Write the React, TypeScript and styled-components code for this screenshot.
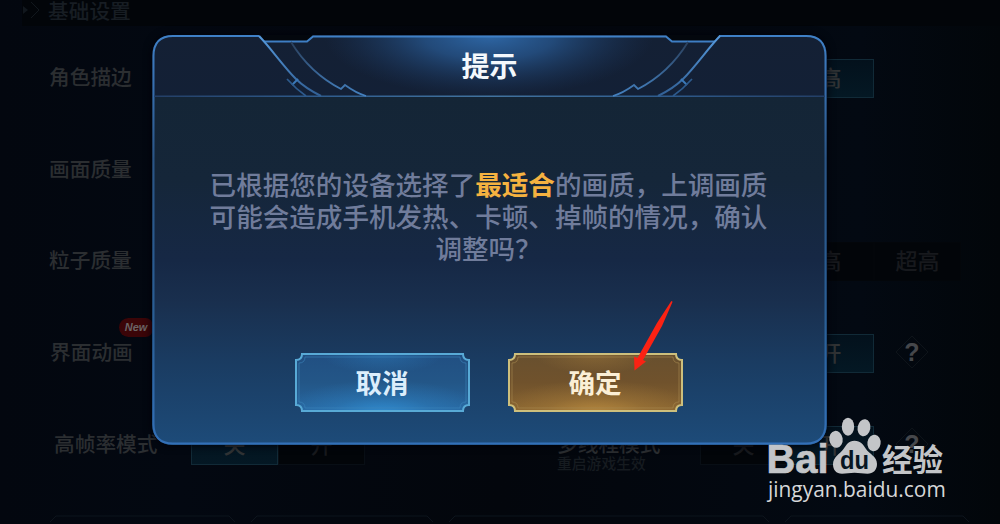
import styled, { createGlobalStyle } from "styled-components";

const GlobalStyle = createGlobalStyle`
  * {
    box-sizing: border-box;
  }
  body {
    margin: 0;
    background: #03070f;
    font-family: "Noto Sans CJK SC", "Liberation Sans", sans-serif;
  }
`;

const StyledScreen = styled.main`
  position: relative;
  width: 1000px;
  height: 524px;
  overflow: hidden;
  background: linear-gradient(
    90deg,
    #03070f 0,
    #030811 18%,
    #03060c 50%,
    #030912 86%,
    #02060a 100%
  );
`;

const StyledSettings = styled.section`
  display: flex;
  flex-direction: column;
  height: 100%;
`;

const StyledHeading = styled.div`
  display: flex;
  align-items: center;
  gap: 7px;
  flex: none;
  height: 26px;
  margin: 0 0 4px 22px;
  padding-bottom: 7px;
  background: #020509;
  color: #171d23;
  font-size: 20.7px;
  font-weight: 500;
  line-height: 18px;
`;

const StyledRow = styled.div`
  display: grid;
  grid-template-columns: 141px 366px 143px 174px 78px;
  align-items: center;
  flex: none;
  height: 91.7px;
  padding-left: 49px;
`;

const StyledLabel = styled.div<{ $indent?: number }>`
  position: relative;
  justify-self: start;
  padding-left: ${(p) => p.$indent ?? 0}px;
  color: #2b2e31;
  font-size: 20.7px;
  font-weight: 500;
  line-height: 24px;
  white-space: nowrap;
`;

const StyledNote = styled.div`
  position: absolute;
  top: 24px;
  left: 1px;
  color: #161b20;
  font-size: 14.8px;
  line-height: 16px;
`;

const StyledNew = styled.span`
  position: absolute;
  top: -21px;
  left: 70px;
  width: 34px;
  height: 19px;
  border-radius: 10px 8px 8px 10px;
  background: #3b0508;
  color: #6b6465;
  font: italic bold 11px/19px "Liberation Sans", sans-serif;
  text-align: center;
`;

const StyledOptions = styled.div<{ $offset?: number }>`
  display: flex;
  margin: 5px 0 0 ${(p) => (p.$offset ?? 0) + 1}px;
`;

const StyledOption = styled.div<{ $active?: boolean; $dim?: boolean }>`
  flex: none;
  width: 87px;
  height: 39px;
  border: 1px solid
    ${(p) => (p.$active ? "#112a37" : p.$dim ? "#03060a" : "#080e15")};
  background: ${(p) =>
    p.$active ? "linear-gradient(#03111c, #041824)" : "#020509"};
  color: ${(p) => (p.$active ? "#303335" : "#17191d")};
  font-size: 22px;
  font-weight: 500;
  line-height: 32px;
  text-align: center;
`;

const StyledHelp = styled.div`
  position: relative;
  display: grid;
  place-items: center;
  width: 34px;
  height: 34px;
  margin: 3px 0 0 22px;
  color: #45474b;
  font: bold 25px/34px "Liberation Sans", sans-serif;

  svg {
    position: absolute;
    inset: 0;
  }
`;

const StyledTabs = styled.div`
  display: flex;
  gap: 16px;
  padding: 27px 0 0 50px;
`;

const StyledModal = styled.div`
  position: absolute;
  top: 35px;
  left: 152px;
  display: flex;
  flex-direction: column;
  align-items: center;
  width: 675px;
  height: 410px;
  border-radius: 20px;
  background: linear-gradient(
    #142034 0,
    #132036 60px,
    #142536 62px,
    #152639 35%,
    #162845 55%,
    #192f4e 65%,
    #1a3c62 80%,
    #1d4b79 100%
  );
  box-shadow: 0 0 8px #00020a;
`;

const StyledModalHeader = styled.div`
  position: relative;
  display: flex;
  align-items: center;
  justify-content: center;
  flex: none;
  width: 100%;
  height: 60px;
  color: #f4f8fc;
  font-size: 28px;
  font-weight: 700;
`;

const StyledFrame = styled.svg`
  position: absolute;
  top: 0;
  left: 0;
`;

const StyledTitle = styled.span`
  position: relative;
  line-height: 40px;
`;

const StyledMessage = styled.p`
  width: 562px;
  height: 100px;
  margin: 73px 2px 85px 0;
  color: #707c9b;
  font-size: 26.57px;
  font-weight: 500;
  line-height: 32px;
  text-align: center;

  b {
    color: #f5b240;
    font-weight: 700;
  }
`;

const StyledActions = styled.div`
  display: flex;
  gap: 38px;
  margin-right: 2px;
`;

const StyledButton = styled.button`
  position: relative;
  width: 175px;
  height: 59px;
  padding: 0;
  border: 0;
  background: none;
  font-family: inherit;
  font-size: 26.5px;
  font-weight: 700;
  line-height: 56px;

  svg {
    position: absolute;
    inset: 0;
  }
`;

const StyledButtonText = styled.span<{ $color: string }>`
  position: relative;
  top: -1px;
  color: ${(p) => p.$color};
`;

const StyledArrow = styled.svg`
  position: absolute;
  top: 298px;
  left: 630px;
`;

const StyledWatermark = styled.div`
  position: absolute;
  top: 416px;
  left: 767px;
  color: #c3c5c8;
`;

const StyledBrand = styled.svg`
  display: block;
`;

const StyledUrl = styled.div`
  padding-left: 1px;
  color: #d6d7d9;
  font: 20.9px/26px "Open Sans", sans-serif;
  white-space: nowrap;
`;

interface FancyButtonProps {
  label: string;
  tone: "blue" | "gold";
}

const tones = {
  blue: {
    top: "#214f82",
    mid: "#235687",
    bottom: "#27669f",
    glow: "#3398e0",
    line: "#58aad6",
    inner: "#3c86bd",
    text: "#dceefc",
  },
  gold: {
    top: "#68502f",
    mid: "#70522c",
    bottom: "#876330",
    glow: "#c59443",
    line: "#cdbf7c",
    inner: "#a98a50",
    text: "#fbefd6",
  },
};

function FancyButton(props: FancyButtonProps) {
  const { label, tone } = props;
  const c = tones[tone];

  return (
    <StyledButton>
      <svg width="175" height="59" viewBox="0 0 175 59" fill="none">
        <defs>
          <linearGradient id={`${tone}-base`} x1="0" y1="0" x2="0" y2="1">
            <stop offset="0" stopColor={c.top} />
            <stop offset=".5" stopColor={c.mid} />
            <stop offset="1" stopColor={c.bottom} />
          </linearGradient>
          <radialGradient id={`${tone}-low`} cx=".5" cy="1.05" r=".6">
            <stop offset="0" stopColor={c.glow} stopOpacity=".75" />
            <stop offset=".5" stopColor={c.glow} stopOpacity=".25" />
            <stop offset="1" stopColor={c.glow} stopOpacity="0" />
          </radialGradient>
          <radialGradient id={`${tone}-high`} cx=".5" cy="0" r=".35">
            <stop offset="0" stopColor={c.glow} stopOpacity=".3" />
            <stop offset="1" stopColor={c.glow} stopOpacity="0" />
          </radialGradient>
        </defs>
        {["base", "low", "high"].map((layer) => (
          <path
            key={layer}
            d="M7 1h161q0 6 6 6v45q-6 0-6 6H7q0-6-6-6V7q6 0 6-6z"
            fill={`url(#${tone}-${layer})`}
          />
        ))}
        <path
          d="M10 4h155q0 6 6 6v39q-6 0-6 6H10q0-6-6-6V10q6 0 6-6z"
          stroke={c.inner}
          opacity=".6"
        />
        <path
          d="M7 1h161q0 6 6 6v45q-6 0-6 6H7q0-6-6-6V7q6 0 6-6z"
          stroke={c.line}
          strokeWidth="2"
        />
      </svg>
      <StyledButtonText $color={c.text}>{label}</StyledButtonText>
    </StyledButton>
  );
}

function Help() {
  return (
    <StyledHelp>
      <svg width="34" height="34" viewBox="0 0 34 34" fill="none">
        <path d="M17 1l16 16-16 16L1 17z" stroke="#0d1319" />
      </svg>
      <span>?</span>
    </StyledHelp>
  );
}

function TabOutline({ width }: { width: number }) {
  return (
    <svg width={width} height="10" fill="none">
      <path d={`M0 7l6-6h${width - 12}l6 6`} stroke="#0d141c" />
    </svg>
  );
}

// One side of the header trim, mirrored for the other side
function HeaderTrim() {
  return (
    <g fill="none" stroke="#3a78b8">
      <path
        d="M107 1C118 12 131 31 144 44Q153 53 169 61"
        stroke="url(#trim)"
        strokeWidth="2"
      />
      <path d="M146 44l-6 6" strokeWidth="2" />
      <path d="M135 44q9 10 19 17" stroke="#2d5a8c" strokeWidth="1.7" />
      <path
        d="M139 7Q158 38 189 54l4-4q11 8 21 11"
        stroke="url(#curve)"
        strokeWidth="1.8"
      />
    </g>
  );
}

function ModalFrame() {
  return (
    <StyledFrame width="675" height="410" viewBox="0 0 675 410" fill="none">
      <defs>
        <radialGradient
          id="glow"
          gradientUnits="userSpaceOnUse"
          cx="0"
          cy="0"
          r="1"
          gradientTransform="translate(337 0) scale(165 62)"
        >
          <stop offset="0" stopColor="#2e67a6" />
          <stop offset=".4" stopColor="#26548a" stopOpacity=".8" />
          <stop offset="1" stopColor="#1b3861" stopOpacity="0" />
        </radialGradient>
        <linearGradient id="edge" x1="0" y1="0" x2="0" y2="1">
          <stop offset="0" stopColor="#3f80c6" />
          <stop offset=".12" stopColor="#366fb0" />
          <stop offset=".3" stopColor="#295486" />
          <stop offset=".7" stopColor="#295f96" />
          <stop offset="1" stopColor="#3370b8" />
        </linearGradient>
        <linearGradient id="trim" x1="0" y1="0" x2="0" y2="1">
          <stop offset="0" stopColor="#5599dc" />
          <stop offset="1" stopColor="#315f94" />
        </linearGradient>
        <linearGradient id="curve" x1="0" y1="0" x2="0" y2="1">
          <stop offset="0" stopColor="#2a405d" />
          <stop offset="1" stopColor="#4481c0" />
        </linearGradient>
        <linearGradient
          id="divider"
          gradientUnits="userSpaceOnUse"
          x1="0"
          y1="0"
          x2="675"
          y2="0"
        >
          <stop offset="0" stopColor="#233e66" />
          <stop offset=".25" stopColor="#2f5c8e" />
          <stop offset=".5" stopColor="#42739f" />
          <stop offset=".75" stopColor="#2f5c8e" />
          <stop offset="1" stopColor="#233e66" />
        </linearGradient>
      </defs>
      <path d="M163 2h349l6 5-60 54H217L157 7z" fill="url(#glow)" />
      {/* notches cut out of the top edge */}
      <path d="M108 0h53l-5 6h-43zM567 0h-53l5 6h43z" fill="#03070d" />
      <path
        d="M112 6.500h43l6-5h353l6 5h43M567 1H654Q673.500 1 673.500 21V389Q673.500 408.500 654 408.500H21Q1.500 408.500 1.500 389V21Q1.500 1 21 1H107"
        stroke="url(#edge)"
        strokeWidth="2"
      />
      <path d="M2 61.200h671" stroke="url(#divider)" strokeWidth="1.600" />
      <HeaderTrim />
      <g transform="translate(675 0) scale(-1 1)">
        <HeaderTrim />
      </g>
    </StyledFrame>
  );
}

function Watermark() {
  return (
    <StyledWatermark>
      <StyledBrand width="180" height="60" viewBox="0 0 180 60" fill="currentColor">
        <text
          x="-.5"
          y="56.500"
          fontFamily="Liberation Sans"
          fontWeight="bold"
          fontSize="40"
          stroke="currentColor"
          strokeWidth=".7"
          textLength="62"
          lengthAdjust="spacingAndGlyphs"
        >
          Bai
        </text>
        <ellipse cx="69" cy="23.300" rx="6.700" ry="8.500" transform="rotate(-8 69 23.300)" />
        <ellipse cx="81" cy="10.700" rx="6.200" ry="9" />
        <ellipse cx="97" cy="11.700" rx="6.400" ry="8.600" transform="rotate(10 97 11.700)" />
        <ellipse cx="107" cy="27" rx="6.600" ry="8.300" transform="rotate(8 107 27)" />
        <path d="M87.500 24.700c6 0 9 4 11.500 8.300 3 5 11 7 11 15 0 6-4 9.800-9.500 9.800-5 0-8-1-13-1s-8 1-12.500 1c-6 0-9-4-9-9.500 0-7.500 7-10.300 10.500-15.300 3-4.300 5-8.300 11-8.300z" />
        <text
          x="73"
          y="52.500"
          fill="#071522"
          fontFamily="Liberation Sans"
          fontWeight="bold"
          fontSize="25"
          textLength="29"
          lengthAdjust="spacingAndGlyphs"
        >
          du
        </text>
        <text
          x="115"
          y="54.500"
          fontFamily="Noto Sans CJK SC"
          fontWeight="700"
          fontSize="30.500"
        >
          经验
        </text>
      </StyledBrand>
      <StyledUrl>jingyan.baidu.com</StyledUrl>
    </StyledWatermark>
  );
}

export default function App() {
  return (
    <StyledScreen>
      <GlobalStyle />
      <StyledSettings>
        <StyledHeading>
          <svg width="19" height="22" viewBox="0 0 19 22" fill="none">
            <path d="M1 7l5 4-5 4z" fill="#11171d" />
            <path d="M9 3l8 8-8 8" stroke="#11171d" />
          </svg>
          基础设置
        </StyledHeading>
        <StyledRow>
          <StyledLabel>角色描边</StyledLabel>
          <span />
          <span />
          <StyledOptions $offset={87}>
            <StyledOption $active>高</StyledOption>
          </StyledOptions>
        </StyledRow>
        <StyledRow>
          <StyledLabel>画面质量</StyledLabel>
        </StyledRow>
        <StyledRow>
          <StyledLabel>粒子质量</StyledLabel>
          <span />
          <span />
          <StyledOptions $offset={87}>
            <StyledOption $dim>高</StyledOption>
            <StyledOption $dim>超高</StyledOption>
          </StyledOptions>
        </StyledRow>
        <StyledRow>
          <StyledLabel $indent={1}>
            界面动画
            <StyledNew>New</StyledNew>
          </StyledLabel>
          <span />
          <span />
          <StyledOptions $offset={87}>
            <StyledOption $active>开</StyledOption>
          </StyledOptions>
          <Help />
        </StyledRow>
        <StyledRow>
          <StyledLabel $indent={5}>高帧率模式</StyledLabel>
          <StyledOptions>
            <StyledOption $active>关</StyledOption>
            <StyledOption>开</StyledOption>
          </StyledOptions>
          <StyledLabel $indent={1}>
            多线程模式
            <StyledNote>重启游戏生效</StyledNote>
          </StyledLabel>
          <StyledOptions>
            <StyledOption>关</StyledOption>
            <StyledOption $active>开</StyledOption>
          </StyledOptions>
          <Help />
        </StyledRow>
        <StyledTabs>
          <TabOutline width={185} />
          <TabOutline width={182} />
          <TabOutline width={320} />
          <TabOutline width={184} />
        </StyledTabs>
      </StyledSettings>

      <StyledModal>
        <ModalFrame />
        <StyledModalHeader>
          <StyledTitle>提示</StyledTitle>
        </StyledModalHeader>
        <StyledMessage>
          已根据您的设备选择了<b>最适合</b>的画质，上调画质可能会造成手机发热、卡顿、掉帧的情况，确认调整吗？
        </StyledMessage>
        <StyledActions>
          <FancyButton label="取消" tone="blue" />
          <FancyButton label="确定" tone="gold" />
        </StyledActions>
      </StyledModal>

      <StyledArrow width="46" height="76" viewBox="0 0 46 76">
        <path
          d="M41 3.500q1-1 1.500.5L32 28 13 62l3 1.500L4.500 72.500 4 58.500l3.500 1.500L27 25z"
          fill="#fb2213"
        />
      </StyledArrow>
      <Watermark />
    </StyledScreen>
  );
}
